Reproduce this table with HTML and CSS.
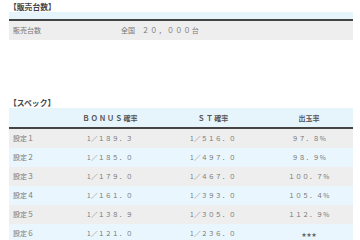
FILE: index.html
```html
<!DOCTYPE html>
<html lang="ja">
<head>
<meta charset="utf-8">
<link rel="stylesheet" href="styles.css">
</head>
<body>
<div class="page">
  <h2 class="title">【販売台数】</h2>
  <table class="tbl sales">
    <thead><tr><th class="c-name"></th><th></th></tr></thead>
    <tbody>
      <tr class="odd"><td class="c-name">販売台数</td><td class="val">全国　<span class="num">２０，０００</span>台</td></tr>
    </tbody>
  </table>

  <h2 class="title spec-title">【スペック】</h2>
  <table class="tbl spec">
    <thead>
      <tr><th class="s1"></th><th class="s2"><span class="lat">ＢＯＮＵＳ</span>確率</th><th class="s3"><span class="lat">ＳＴ</span>確率</th><th class="s4">出玉率</th></tr>
    </thead>
    <tbody>
      <tr class="odd"><td class="c-name">設定１</td><td class="num">1／１８９．３</td><td class="num">1／５１６．０</td><td class="num">９７．８%</td></tr>
      <tr class="even"><td class="c-name">設定２</td><td class="num">1／１８５．０</td><td class="num">1／４９７．０</td><td class="num">９８．９%</td></tr>
      <tr class="odd"><td class="c-name">設定３</td><td class="num">1／１７９．０</td><td class="num">1／４６７．０</td><td class="num">１００．７%</td></tr>
      <tr class="even"><td class="c-name">設定４</td><td class="num">1／１６１．０</td><td class="num">1／３９３．０</td><td class="num">１０５．４%</td></tr>
      <tr class="odd"><td class="c-name">設定５</td><td class="num">1／１３８．９</td><td class="num">1／３０５．０</td><td class="num">１１２．９%</td></tr>
      <tr class="even"><td class="c-name">設定６</td><td class="num">1／１２１．０</td><td class="num">1／２３６．０</td><td class="num stars">★★★</td></tr>
    </tbody>
  </table>
</div>
</body>
</html>
```
FILE: styles.css
```css
html, body {
  margin: 0;
  padding: 0;
  background: #ffffff;
}
.page {
  padding: 1px 7px 0 9px;
  font-family: "Noto Sans CJK JP", "Noto Sans", sans-serif;
  color: #777;
  font-size: 7px;
}
.title {
  margin: 0;
  font-size: 7.8px;
  line-height: 11px;
  font-weight: bold;
  color: #444;
}
.spec-title {
  margin-top: 57px;
}
.tbl {
  width: 344px;
  border-collapse: collapse;
  table-layout: fixed;
}
.tbl thead tr {
  background: #e6f4fc;
  border-bottom: 2px solid #444;
}
.tbl th, .tbl td {
  padding: 0;
}
.sales thead th {
  height: 7px;
}
.sales .c-name {
  width: 112px;
}
.tbl td {
  height: 19px;
  line-height: 19px;
  white-space: nowrap;
}
.tbl td.c-name {
  padding-left: 4px;
  text-align: left;
}
.odd {
  background: #eeeeee;
}
.even {
  background: #eaf6fd;
}
.val .num {
  letter-spacing: 1.3px;
}
.spec th {
  height: 19px;
  font-weight: bold;
  color: #555;
  font-size: 7px;
  text-align: center;
}
.spec th .lat {
  letter-spacing: 1.2px;
}
.spec .s1 { width: 50px; }
.spec .s2 { width: 102px; }
.spec .s3 { width: 104px; }
.spec .s4 { width: 88px; }
.spec td.num {
  text-align: center;
  font-size: 6.6px;
  letter-spacing: 0.4px;
}
.spec td.stars {
  font-size: 5px;
  letter-spacing: 0;
  color: #666;
}
```
